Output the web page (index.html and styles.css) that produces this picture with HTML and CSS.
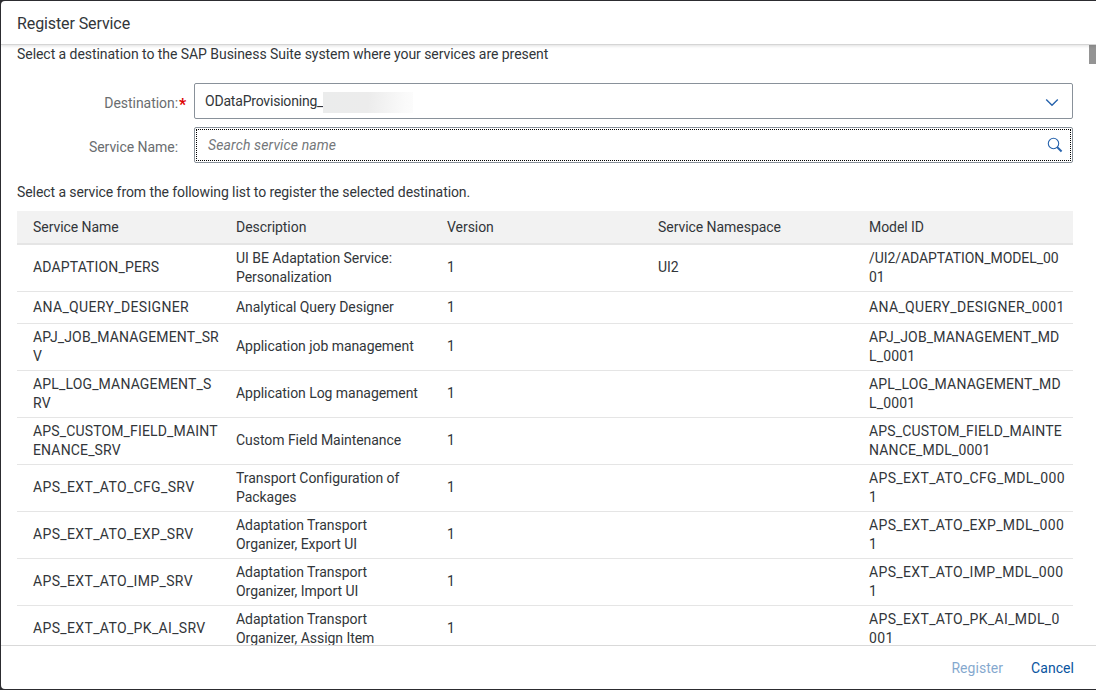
FILE: index.html
```html
<!DOCTYPE html>
<html lang="en">
<head>
<meta charset="utf-8">
<title>Register Service</title>
<link rel="stylesheet" href="styles.css">
</head>
<body>
<div class="dialog">
  <header class="dialog-header"><h1>Register Service</h1></header>
  <main class="dialog-body">
    <p class="intro">Select a destination to the SAP Business Suite system where your services are present</p>
    <div class="form">
      <label class="label required">Destination:</label>
      <div class="field select">
        <span class="value">ODataProvisioning_</span><span class="redacted"></span>
        <svg class="chevron" viewBox="0 0 14 9" width="14" height="9"><path d="M1.2 1.5 L7 7.2 L12.8 1.5"/></svg>
      </div>
      <label class="label">Service Name:</label>
      <div class="field search">
        <div class="focus"><span class="placeholder">Search service name</span>
        <svg class="glass" viewBox="0 0 16 16" width="16" height="16"><circle cx="6.5" cy="6.5" r="5.2"/><path d="M10 10 L11.5 11.5"/><path class="handle" d="M10.8 10.8 L14.6 14.4"/></svg></div>
      </div>
    </div>
    <p class="hint">Select a service from the following list to register the selected destination.</p>
    <table class="services">
      <colgroup><col class="col-name"><col class="col"><col class="col"><col class="col"><col></colgroup>
      <thead><tr><th>Service Name</th><th>Description</th><th>Version</th><th>Service Namespace</th><th>Model ID</th></tr></thead>
      <tbody>
        <tr><td class="id">ADAPTATION_PERS</td><td>UI BE Adaptation Service:<br>Personalization</td><td>1</td><td>UI2</td><td class="id tight">/UI2/ADAPTATION_MODEL_00<br>01</td></tr>
        <tr><td class="id wide">ANA_QUERY_DESIGNER</td><td>Analytical Query Designer</td><td>1</td><td></td><td class="id wide">ANA_QUERY_DESIGNER_0001</td></tr>
        <tr><td class="id">APJ_JOB_MANAGEMENT_SR<br>V</td><td>Application job management</td><td>1</td><td></td><td class="id">APJ_JOB_MANAGEMENT_MD<br>L_0001</td></tr>
        <tr><td class="id">APL_LOG_MANAGEMENT_S<br>RV</td><td>Application Log management</td><td>1</td><td></td><td class="id">APL_LOG_MANAGEMENT_MD<br>L_0001</td></tr>
        <tr><td class="id">APS_CUSTOM_FIELD_MAINT<br>ENANCE_SRV</td><td>Custom Field Maintenance</td><td>1</td><td></td><td class="id">APS_CUSTOM_FIELD_MAINTE<br>NANCE_MDL_0001</td></tr>
        <tr><td class="id wide">APS_EXT_ATO_CFG_SRV</td><td>Transport Configuration of<br>Packages</td><td>1</td><td></td><td class="id wide">APS_EXT_ATO_CFG_MDL_000<br>1</td></tr>
        <tr><td class="id wide">APS_EXT_ATO_EXP_SRV</td><td>Adaptation Transport<br>Organizer, Export UI</td><td>1</td><td></td><td class="id wide">APS_EXT_ATO_EXP_MDL_000<br>1</td></tr>
        <tr><td class="id wide">APS_EXT_ATO_IMP_SRV</td><td>Adaptation Transport<br>Organizer, Import UI</td><td>1</td><td></td><td class="id wide">APS_EXT_ATO_IMP_MDL_000<br>1</td></tr>
        <tr><td class="id wide">APS_EXT_ATO_PK_AI_SRV</td><td>Adaptation Transport<br>Organizer, Assign Item</td><td>1</td><td></td><td class="id wide">APS_EXT_ATO_PK_AI_MDL_0<br>001</td></tr>
      </tbody>
    </table>
    <div class="scroll-thumb"></div>
  </main>
  <footer class="dialog-footer"><button class="btn" disabled>Register</button><button class="btn">Cancel</button></footer>
</div>
</body>
</html>
```
FILE: styles.css
```css
* { box-sizing: border-box; }
body { margin: 0; padding: 1px 0 1px 1px; height: 690px; overflow: hidden; background: #2c2c30; font: 14px/19px Roboto, "Liberation Sans", sans-serif; letter-spacing: -.05px; color: #32363a; }
.dialog { display: flex; flex-direction: column; height: 688px; background: #fff; border-radius: 4px 0 0 4px; overflow: hidden; }
.dialog-header { flex: none; display: flex; align-items: center; height: 44px; padding: 3px 16px 0; border-bottom: 1px solid #d5d5d5; box-shadow: 0 1px 3px rgba(0,0,0,.13); z-index: 1; }
h1 { margin: 0; font-size: 16px; line-height: 20px; font-weight: 400; letter-spacing: -.1px; }
.dialog-body { position: relative; flex: 1; min-height: 0; overflow: hidden; padding: 0 23px 0 16px; }
p { margin: 0; }
.intro { height: 38px; }
.form { display: grid; grid-template-columns: 161px 1fr; grid-auto-rows: 36px; row-gap: 8px; column-gap: 16px; }
.label { align-self: center; text-align: right; color: #6a6d70; padding-top: 4px; }
.required { position: relative; }
.required::after { content: "*"; position: absolute; left: 162px; top: 5px; color: #d00; font-size: 16px; font-weight: 700; }
.field { border: 1px solid #89919a; border-radius: 2px; }
.select { display: flex; align-items: center; padding: 0 13px 0 10px; }
.value { width: 118px; letter-spacing: -.2px; }
.redacted { width: 90px; height: 21px; margin-top: 2px; background: linear-gradient(95deg, #ebecec 0%, #ececec 50%, #fafafa 90%, #fcfcfc 100%); }
.chevron { margin: 3px 0 0 auto; fill: none; stroke: #2864ad; stroke-width: 1.4; }
.search { padding: 1px; }
.focus { display: flex; align-items: center; height: 32px; border: 1px dotted #000; padding: 0 7px 0 11px; }
.placeholder { font-style: italic; color: #74777a; letter-spacing: .13px; }
.glass { margin-left: auto; fill: none; stroke: #2864ad; stroke-width: 1.1; }
.handle { stroke-width: 2; }
.hint { padding-top: 20px; height: 48px; letter-spacing: -.08px; }
.services { table-layout: fixed; width: 1056px; border-collapse: separate; border-spacing: 0; }
.col-name, .col { width: 211px; }
th { height: 34px; padding: 0 8px; background: #f2f2f2; border-bottom: 2px solid #e5e5e5; font-weight: 400; text-align: left; }
td { height: 32px; padding: 4px 8px; border-bottom: 1px solid #e5e5e5; white-space: nowrap; vertical-align: middle; line-height: 19px; }
tbody tr:not(:nth-child(2)) td:not(:has(br)) { padding: 3px 8px 5px; }
tbody tr:not(:nth-child(2)) td:first-child:not(:has(br)), th:first-child, td:first-child { padding-left: 16px; }
.id { letter-spacing: .15px; }
.wide { letter-spacing: .35px; }
.tight { letter-spacing: -.07px; }
.scroll-thumb { position: absolute; right: 0; top: 0; width: 7px; height: 19px; background: #949494; }
.dialog-footer { flex: none; display: flex; justify-content: flex-end; align-items: center; gap: 28px; height: 44px; padding: 2px 22px 0 0; border-top: 1px solid #d9d9d9; }
.btn { border: 0; padding: 0; background: none; font: inherit; letter-spacing: .05px; color: #0854a0; }
.btn:disabled { opacity: .5; }
```
